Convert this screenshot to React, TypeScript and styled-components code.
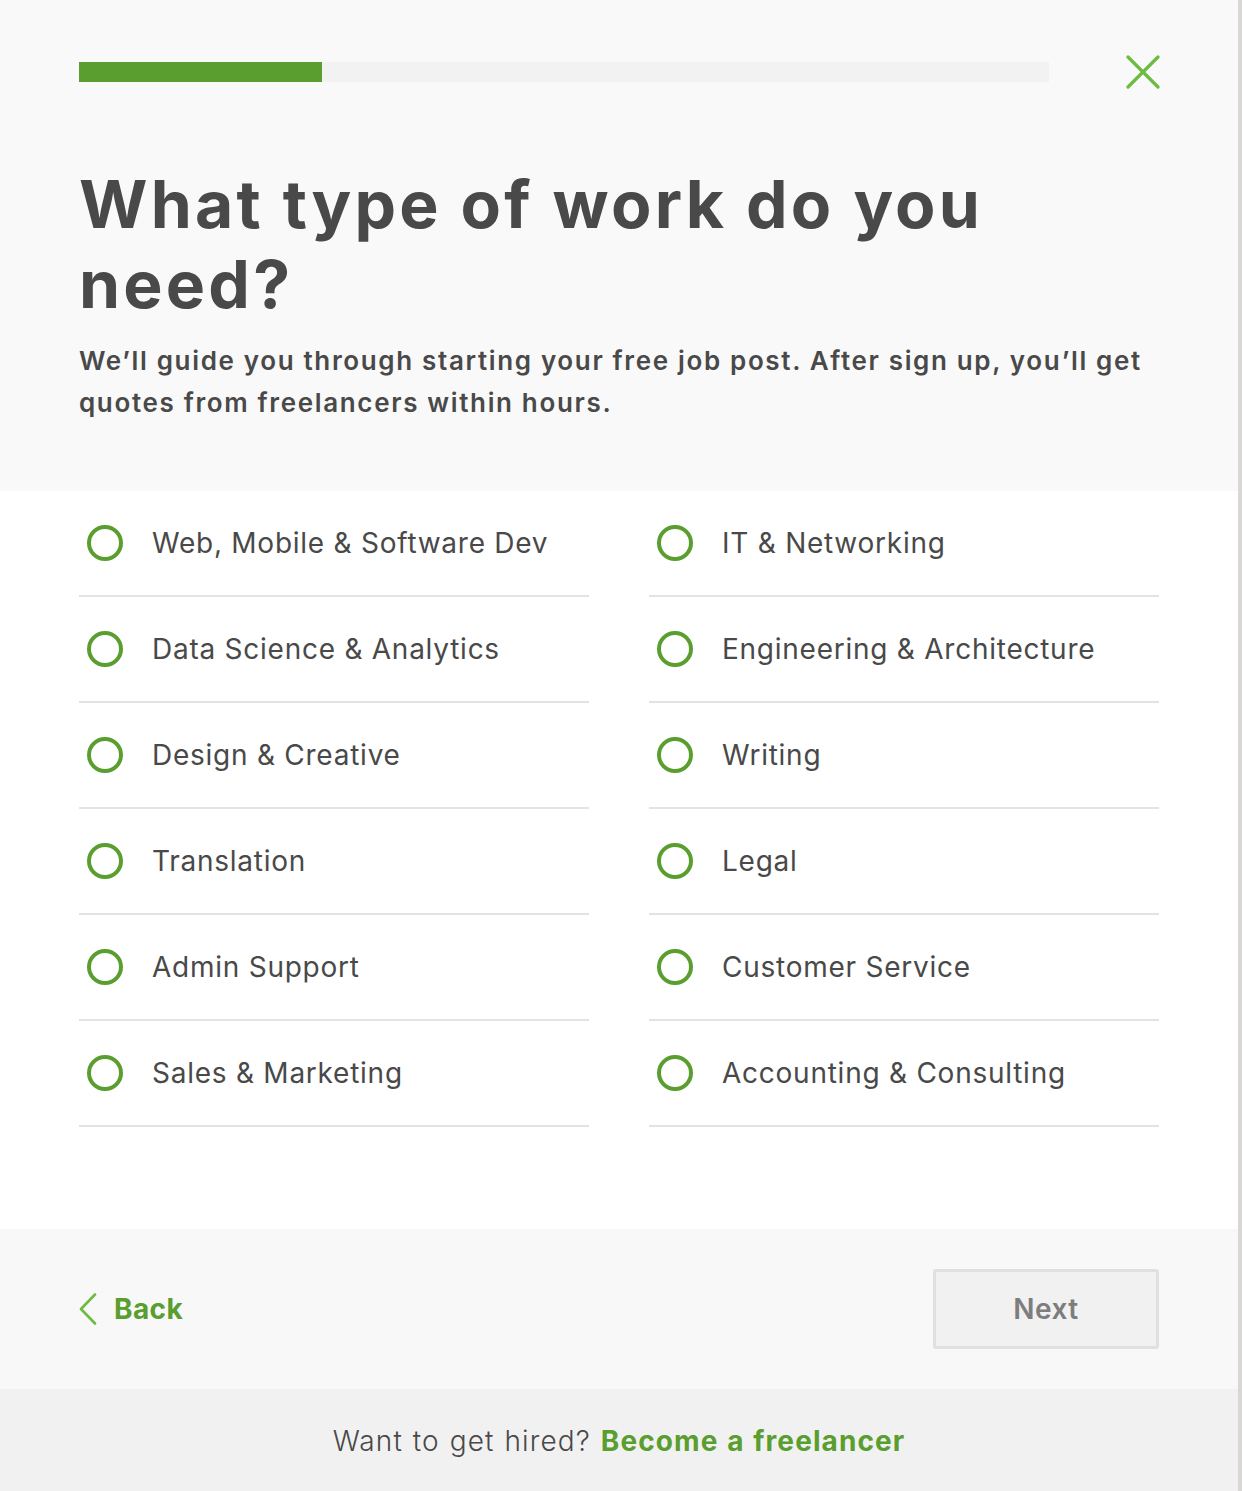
import React from 'react';
import styled, { createGlobalStyle } from 'styled-components';

const categories = [
  'Web, Mobile & Software Dev',
  'IT & Networking',
  'Data Science & Analytics',
  'Engineering & Architecture',
  'Design & Creative',
  'Writing',
  'Translation',
  'Legal',
  'Admin Support',
  'Customer Service',
  'Sales & Marketing',
  'Accounting & Consulting',
];

const App = () => {
  return (
    <>
      <GlobalStyle />
      <Modal>
        <Header>
          <ProgressRow>
            <Track>
              <Fill style={{ width: '25%' }} />
            </Track>
            <CloseButton aria-label='Close'>
              <svg width='34' height='34' viewBox='0 0 34 34'>
                <path d='M2 2 L32 32 M32 2 L2 32' stroke='#6dbb43' strokeWidth='3.2' strokeLinecap='round' />
              </svg>
            </CloseButton>
          </ProgressRow>
          <Title>What type of work do you need?</Title>
          <Lead>
            We’ll guide you through starting your free job post. After sign up, you’ll get quotes from freelancers
            within hours.
          </Lead>
        </Header>

        <Options>
          {categories.map((name) => (
            <Option key={name}>
              <Radio />
              <OptionLabel>{name}</OptionLabel>
            </Option>
          ))}
        </Options>

        <Actions>
          <BackLink>
            <svg width='18' height='32' viewBox='0 0 18 32'>
              <path d='M16 1.5 L2 16 L16 30.5' fill='none' stroke='#6dbb43' strokeWidth='2.6' strokeLinecap='round' strokeLinejoin='round' />
            </svg>
            Back
          </BackLink>
          <NextButton disabled>Next</NextButton>
        </Actions>

        <Bottom>
          Want to get hired? <strong>Become a freelancer</strong>
        </Bottom>
      </Modal>
    </>
  );
};

export default App;

const GlobalStyle = createGlobalStyle`
  body {
    margin: 0;
    background: #d9d7d4;
    font-family: Inter, 'Open Sans', 'Liberation Sans', sans-serif;
    color: #494949;
  }
`;

const Modal = styled.div`
  width: 1238px;
  background: #f9f9f9;
`;

const Header = styled.div`
  padding: 55px 79px 67px;
`;

const ProgressRow = styled.div`
  display: flex;
  align-items: center;
  justify-content: space-between;
`;

const Track = styled.div`
  width: 970px;
  height: 20px;
  background: #f2f2f2;
`;

const Fill = styled.div`
  height: 100%;
  background: #5a9e2f;
`;

const CloseButton = styled.button`
  width: 34px;
  height: 34px;
  padding: 0;
  margin-right: -1px;
  border: 0;
  background: none;
  display: flex;
  cursor: pointer;
`;

const Title = styled.h1`
  margin: 75px 0 0;
  max-width: 1000px;
  font-size: 66px;
  line-height: 80px;
  font-weight: 700;
  letter-spacing: 3.2px;
  color: #494949;
`;

const Lead = styled.p`
  margin: 16px 0 0;
  font-size: 26px;
  line-height: 42px;
  font-weight: 600;
  letter-spacing: 1.65px;
  color: #494949;
`;

const Options = styled.div`
  background: #fff;
  padding: 0 79px 102px;
  display: grid;
  grid-template-columns: 510px 510px;
  column-gap: 60px;
`;

const Option = styled.label`
  height: 104px;
  display: flex;
  align-items: center;
  gap: 29px;
  padding-left: 8px;
  border-bottom: 2px solid #e3e3e3;
  cursor: pointer;
`;

const Radio = styled.span`
  width: 36px;
  height: 36px;
  box-sizing: border-box;
  border: 4px solid #5a9e2f;
  border-radius: 50%;
  flex-shrink: 0;
`;

const OptionLabel = styled.span`
  font-size: 28px;
  letter-spacing: 0.75px;
  color: #494949;
`;

const Actions = styled.div`
  height: 160px;
  background: #f8f8f8;
  padding: 0 79px;
  display: flex;
  align-items: center;
  justify-content: space-between;
`;

const BackLink = styled.a`
  display: flex;
  align-items: center;
  gap: 17px;
  font-size: 28px;
  font-weight: 700;
  letter-spacing: 0.4px;
  color: #5a9e2f;
  cursor: pointer;
`;

const NextButton = styled.button`
  width: 226px;
  height: 80px;
  border: 3px solid #e0e0e0;
  border-radius: 3px;
  background: #f1f1f1;
  font-family: inherit;
  font-size: 28px;
  font-weight: 600;
  letter-spacing: 0.5px;
  color: #7d7d7d;
`;

const Bottom = styled.div`
  height: 103px;
  background: #f1f1f1;
  display: flex;
  align-items: center;
  justify-content: center;
  font-size: 28px;
  font-weight: 300;
  letter-spacing: 1.1px;
  word-spacing: 1px;
  color: #494949;

  strong {
    margin-left: 10px;
    font-weight: 700;
    color: #5a9e2f;
  }
`;
